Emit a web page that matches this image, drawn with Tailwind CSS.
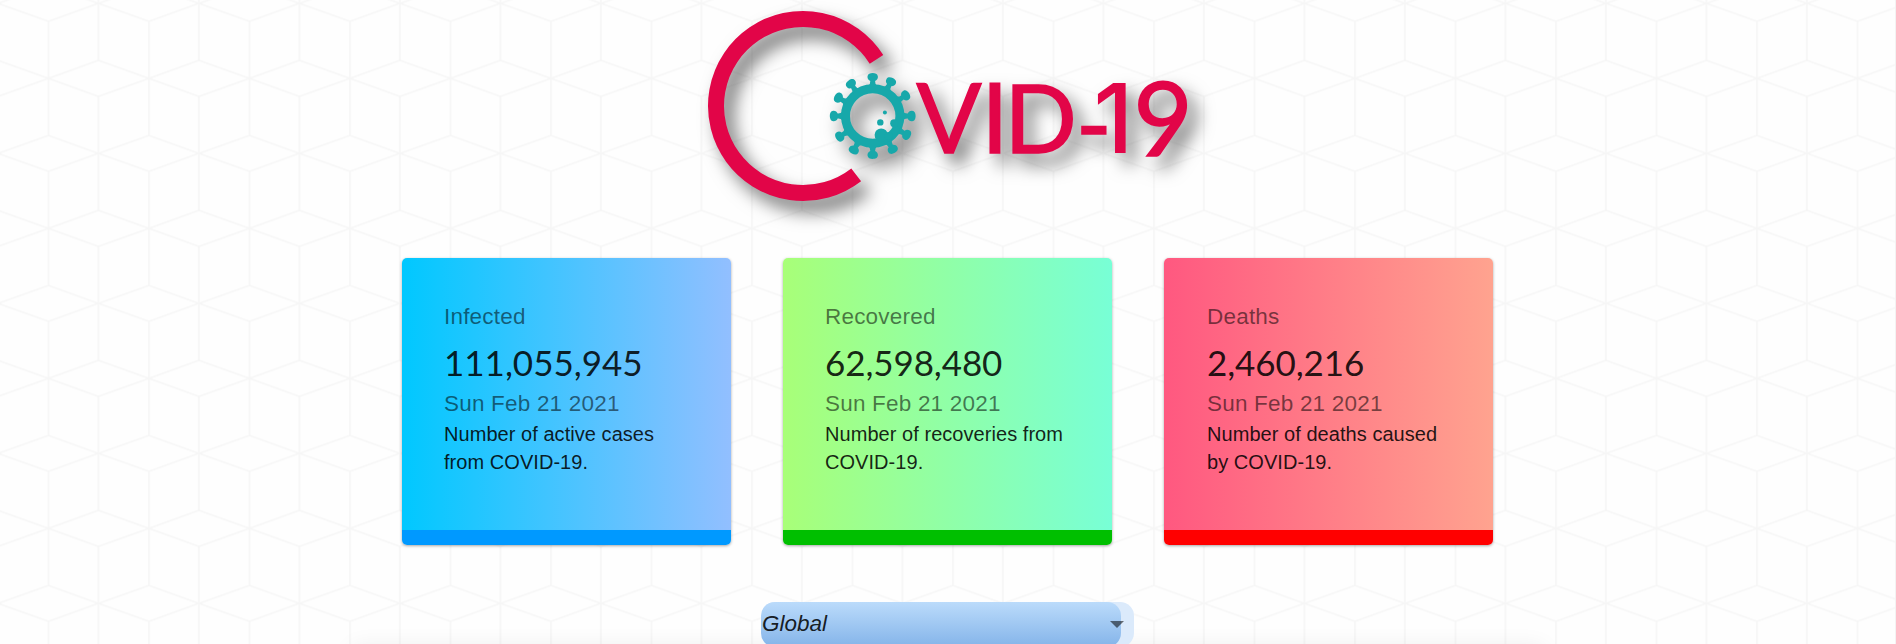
<!DOCTYPE html>
<html lang="en">
<head>
<meta charset="utf-8">
<title>COVID-19 Tracker</title>
<script src="https://cdn.jsdelivr.net/npm/@tailwindcss/browser@4"></script>
</head>
<body class="relative h-[644px] overflow-hidden bg-[#fefefe] font-['Liberation_Sans',Arial,sans-serif] text-black/87">
<svg class="absolute inset-0 -z-10 h-full w-full" aria-hidden="true">
  <defs>
    <pattern id="cubes" x="98.4" y="3.4" width="100.5" height="150" patternUnits="userSpaceOnUse">
      <g fill="none" stroke="#f6f6f6" stroke-width="1.6">
        <path d="M0 0L50.6 18L100.5 0M0 150L50.6 132L100.5 150M50.6 75L0 57M50.6 75L100.5 57M50.6 75L0 93M50.6 75L100.5 93M50.6 18V132"/>
        <path d="M0 0V57M100.5 0V57M0 93V150M100.5 93V150"/>
      </g>
    </pattern>
  </defs>
  <rect width="100%" height="100%" fill="url(#cubes)"/>
  <rect x="1895" width="1" height="100%" fill="#f3f3f3"/>
</svg>

<main class="flex h-[644px] flex-col items-center overflow-hidden pt-[11px]">
  <svg class="h-[190px] w-[480px] shrink-0 overflow-visible drop-shadow-[9px_11px_9px_rgba(0,0,0,0.55)]" viewBox="708 11 480 190" role="img" aria-label="COVID-19">
    <path d="M876.5 59.4A87 87 0 1 0 856.2 174.8" fill="none" stroke="#e20548" stroke-width="16"/>
    <g transform="translate(872.7 116)" fill="#17a8aa">
      <defs>
        <path id="spike" d="M-4.5-30Q-2.2-32-2.4-35C-4.2-35.8-5.4-37.2-5.2-39.5C-5-42-2.5-42.9 0-42.9C2.5-42.9 5-42 5.2-39.5C5.4-37.2 4.2-35.8 2.4-35Q2.2-32 4.5-30Z"/>
      </defs>
      <circle r="27.2" fill="none" stroke="#17a8aa" stroke-width="9"/>
      <use href="#spike"/><use href="#spike" transform="rotate(28)"/><use href="#spike" transform="rotate(58)"/>
      <use href="#spike" transform="rotate(90)"/><use href="#spike" transform="rotate(119)"/><use href="#spike" transform="rotate(149)"/>
      <use href="#spike" transform="rotate(180)"/><use href="#spike" transform="rotate(209)"/><use href="#spike" transform="rotate(238)"/>
      <use href="#spike" transform="rotate(270)"/><use href="#spike" transform="rotate(298)"/><use href="#spike" transform="rotate(326)"/>
      <circle cx="12.2" cy="-3.6" r="2"/><circle cx="7.6" cy="6.4" r="3.2"/><circle cx="21.5" cy="7.3" r="4"/>
      <circle cx="8.5" cy="19" r="6.6"/><circle cx="16" cy="20" r="4"/>
    </g>
    <text y="152.5" fill="#e20548" stroke="#e20548" stroke-width="1.6" font-family="Lato, sans-serif" font-size="96" font-weight="400"><tspan x="916.5">V</tspan><tspan x="981.5">I</tspan><tspan x="1004.5" font-size="95">D</tspan><tspan x="1076" y="158.5">-</tspan><tspan x="1093.5" y="153" font-family="Inter" font-size="96" font-weight="500" stroke="none">1</tspan><tspan x="1133.5" y="155.5" font-size="102">9</tspan></text>
  </svg>

  <section class="mt-[57px] grid shrink-0 grid-cols-[329px_329px_329px] gap-[52px] pr-px">
    <article class="h-[287px] rounded-[5px] border-b-[15px] border-[#0099ff] bg-linear-to-r/srgb from-[#00c8ff] to-[#92bfff] px-[42px] pt-[42px] shadow-[0_1px_3px_rgba(0,0,0,0.35)]">
      <p class="text-[22.5px] leading-[33px] tracking-[0.2px] text-black/54">Infected</p>
      <p class="mt-[6px] font-[Lato] text-[35px] leading-[46px]">111,055,945</p>
      <p class="mt-[2px] text-[22.5px] leading-[33px] tracking-[0.2px] text-black/54">Sun Feb 21 2021</p>
      <p class="text-[20px] leading-[28px] tracking-[0.05px]">Number of active cases<br>from COVID-19.</p>
    </article>
    <article class="h-[287px] rounded-[5px] border-b-[15px] border-[#00bf00] bg-linear-to-r/srgb from-[#a8ff78] to-[#78ffd6] px-[42px] pt-[42px] shadow-[0_1px_3px_rgba(0,0,0,0.35)]">
      <p class="text-[22.5px] leading-[33px] tracking-[0.2px] text-black/54">Recovered</p>
      <p class="mt-[6px] font-[Lato] text-[35px] leading-[46px] tracking-[-0.1px]">62,598,480</p>
      <p class="mt-[2px] text-[22.5px] leading-[33px] tracking-[0.2px] text-black/54">Sun Feb 21 2021</p>
      <p class="text-[20px] leading-[28px] tracking-[0.05px]">Number of recoveries from<br>COVID-19.</p>
    </article>
    <article class="h-[287px] rounded-[5px] border-b-[15px] border-[#ff0000] bg-linear-to-r/srgb from-[#ff5880] to-[#ffa38f] pr-[40px] pl-[43px] pt-[42px] shadow-[0_1px_3px_rgba(0,0,0,0.35)]">
      <p class="text-[22.5px] leading-[33px] tracking-[0.2px] text-black/54">Deaths</p>
      <p class="mt-[6px] font-[Lato] text-[35px] leading-[46px] tracking-[-0.1px]">2,460,216</p>
      <p class="mt-[2px] text-[22.5px] leading-[33px] tracking-[0.2px] text-black/54">Sun Feb 21 2021</p>
      <p class="text-[20px] leading-[28px] tracking-[0.05px]">Number of deaths caused<br>by COVID-19.</p>
    </article>
  </section>

  <div class="relative z-10 mt-[57px] mr-px h-[45px] w-[373px] shrink-0 rounded-[14px] bg-[#dbeafb]">
    <div class="flex h-full w-[360px] items-center rounded-[14px] bg-linear-to-b/srgb from-[#bbdbfb] to-[#84b4e9] pb-px pl-px text-[22.5px] italic">Global</div>
    <svg class="absolute right-[10px] top-[19px] h-[7px] w-[14px]" viewBox="0 0 14 7"><path d="M0 0H14L7 7Z" fill="#000" fill-opacity=".54"/></svg>
  </div>
  <div class="h-10 w-[1190px] shrink-0 shadow-[0_2px_25px_rgba(0,0,0,0.09)]"></div>
</main>
</body>
</html>
